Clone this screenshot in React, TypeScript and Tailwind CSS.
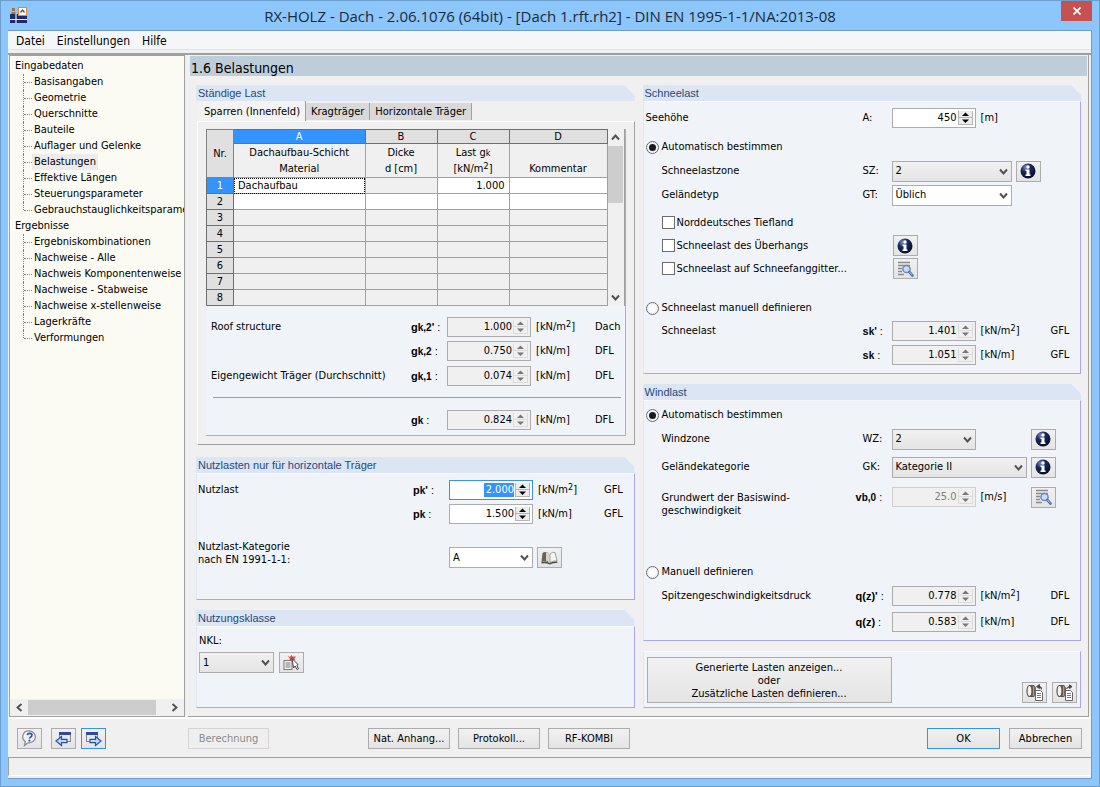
import React, { useId } from "react";
import clsx from "clsx";

/* ---------- icons ---------- */

const AppIcon = () => (
  <svg width="17" height="17" viewBox="0 0 17 17" aria-hidden="true">
    <rect x="0" y="7" width="17" height="9" fill="#1f2a6b" />
    <path d="M0 12.5h17M6 7v9" stroke="#e8ecf8" strokeWidth="1.2" />
    <path d="M2 1h3v3H2zM1.500 5h4v2h-4z" fill="#a0734a" />
    <rect x="8.500" y="0.500" width="8" height="8" fill="#fff" stroke="#d98a4a" />
    <path d="M10.500 5.500l2-2.500 2 2.500" fill="none" stroke="#7a4a2a" strokeWidth="1.400" />
  </svg>
);

const Chevron = ({ dir = "down" }: { dir?: "down" | "up" | "left" | "right" }) => {
  const d = {
    down: "M1 2.500l3.500 4 3.500-4",
    up: "M1 6.500l3.500-4 3.500 4",
    left: "M6.500 1l-4 3.500 4 3.500",
    right: "M2.500 1l4 3.500-4 3.500",
  }[dir];
  return (
    <svg width="9" height="9" viewBox="0 0 9 9" aria-hidden="true" className="shrink-0">
      <path d={d} fill="none" stroke="#505050" strokeWidth="1.900" />
    </svg>
  );
};

const InfoIcon = () => (
  <svg width="16" height="16" viewBox="0 0 16 16" aria-hidden="true">
    <defs>
      <radialGradient id="ball" cx="0.350" cy="0.250" r="0.800">
        <stop offset="0" stopColor="#7d8fc4" />
        <stop offset="0.400" stopColor="#1c2a5c" />
        <stop offset="1" stopColor="#060b26" />
      </radialGradient>
    </defs>
    <circle cx="8" cy="8" r="7.500" fill="url(#ball)" />
    <circle cx="8" cy="4" r="1.700" fill="#fff" />
    <path d="M5.500 6.500h4v5h1v1.500h-5v-1.500h1V8h-1z" fill="#fff" />
  </svg>
);

const LensIcon = () => (
  <svg width="17" height="16" viewBox="0 0 17 16" aria-hidden="true">
    <path d="M1 1.500h12M1 4.500h12M1 7.500h4M1 10.500h4M1 13.500h6" stroke="#8b8b8b" strokeWidth="1.300" />
    <circle cx="9.500" cy="8" r="3.600" fill="#c9dcf8" stroke="#7089b4" strokeWidth="1.500" />
    <path d="M12.300 11l3.200 3.500" stroke="#5676b8" strokeWidth="2.600" strokeLinecap="round" />
    <path d="M12.500 11l2.500 2.800" stroke="#a9c1ea" strokeWidth="0.900" />
  </svg>
);

const BookIcon = () => (
  <svg width="17" height="14" viewBox="0 0 17 14" aria-hidden="true">
    <path d="M1.500 2Q4 0 7.500 2v9Q4 9.500 0.500 11z" fill="#6a625a" />
    <path d="M5 1.200Q7 1 8.500 3v8.500Q7 9.500 5 9.800z" fill="#d8d2c8" />
    <path d="M9 3Q11 0.500 14 1.500l2 8.500Q12 9.500 9 11.500z" fill="#f6f6f4" stroke="#8a8a88" strokeWidth="0.800" />
    <path d="M0.500 11Q5 9.700 8.700 12 12 10 16.300 10.500v1.500Q12 11.500 8.700 13.500 5 11.500 0.500 12.500z" fill="#4d4d4d" />
  </svg>
);

const PickListIcon = () => (
  <svg width="17" height="17" viewBox="0 0 17 17" aria-hidden="true">
    <rect x="1" y="6.500" width="8" height="9" fill="#f6f6f6" stroke="#777" />
    <path d="M2.500 9h5M2.500 11h5M2.500 13h5" stroke="#777" />
    <path d="M4.500 2l2.500 1 1.500-2 1.500 2 3-1-1.500 2.500 1 2-3-1L7 6.500 6.500 4z" fill="#d94a42" />
    <path d="M9 4.500l6 6-1.200 0.600 1.700 3.600-1.500 0.800-1.900-3.500L10.500 14z" fill="#fff" stroke="#444" strokeWidth="1" />
  </svg>
);

const HelpIcon = () => (
  <svg width="17" height="17" viewBox="0 0 17 17" aria-hidden="true">
    <path d="M8.500 1a6.500 5.800 0 1 1-1.500 11.800L3.500 15.500l0.800-4A6 5.800 0 0 1 8.500 1z" fill="#f2f4f8" stroke="#8e8e8e" strokeWidth="1.300" />
    <path d="M6.300 5.200Q6.500 3.400 8.700 3.400t2.200 1.900q0 1.200-1.400 1.900-0.900 0.500-0.900 1.400" fill="none" stroke="#33549c" strokeWidth="1.700" />
    <circle cx="8.400" cy="10.600" r="1.100" fill="#33549c" />
  </svg>
);

const WindowArrowIcon = ({ back }: { back?: boolean }) => (
  <svg width="17" height="16" viewBox="0 0 17 16" aria-hidden="true">
    <g transform={back ? undefined : "translate(17 0) scale(-1 1)"}>
      <rect x="4.500" y="1.500" width="11" height="9" fill="#e6e8ee" stroke="#83838f" />
      <rect x="4" y="1" width="12" height="3" fill="#34499a" />
      <path d="M1 10l5.500-4.500V8.300H12v3.400H6.500v2.800z" fill="#b9dbfb" stroke="#2c4fa6" strokeWidth="1.200" />
    </g>
  </svg>
);

const TransferIcon = ({ out }: { out?: boolean }) => (
  <svg width="18" height="17" viewBox="0 0 18 17" aria-hidden="true">
    <path d="M3.500 1.500H8q1.500 0.500 1.500 5.500T8 12.500H3.500z" fill="#5f564d" stroke="#5b5550" />
    <path d="M6.800 2h1.500v10H6.800z" fill="#a59c90" />
    <ellipse cx="3.500" cy="7" rx="2.500" ry="5.500" fill="#f4f2ee" stroke="#5b5550" strokeWidth="1.200" />
    <path
      d={out ? "M10.500 5Q11 2.500 14 2.500M13.500 0.800l2.500 1.900-2.500 1.900z" : "M15.500 5.500Q16 2.500 13 2.500M13.500 0.500L10.500 2.600l3 2z"}
      fill="#444"
      stroke="#444"
      strokeWidth="0.900"
    />
    <path d="M9.500 6.500h5l2 2v8h-7z" fill="#fff" stroke="#666" />
    <path d="M11 9.500h4M11 11.500h4M11 13.500h4" stroke="#777" />
  </svg>
);

/* ---------- controls ---------- */

const face = "bg-linear-to-b from-[#f1f1f1] to-[#e4e4e4]";

function IconButton({ label, active, children }: { label: string; active?: boolean; children: React.ReactNode }) {
  return (
    <button
      type="button"
      aria-label={label}
      className={clsx("flex h-[21px] w-[25px] shrink-0 items-center justify-center border", face, active ? "border-[#3393ee]" : "border-[#acacac]")}
    >
      {children}
    </button>
  );
}

function TextButton({ className, children, disabled }: { className: string; children: React.ReactNode; disabled?: boolean }) {
  return (
    <button
      type="button"
      disabled={disabled}
      className={clsx("flex h-[21px] shrink-0 items-center justify-center border pt-px", className, disabled ? "border-[#d5d5d5] bg-[#efefef] text-[#8a8a8a]" : face)}
    >
      {children}
    </button>
  );
}

type SpinState = "edit" | "focus" | "readonly" | "off";

function Spin({ id, value, state = "readonly" }: { id: string; value: string; state?: SpinState }) {
  const live = state === "edit" || state === "focus";
  return (
    <div
      className={clsx(
        "flex h-5 w-[84px] shrink-0 items-center border pr-[2px]",
        state === "focus" ? "border-[#3393ee]" : state === "off" ? "border-[#cfcfcf]" : "border-[#acacac]",
        live ? "bg-white" : "bg-[#f0f0f0]",
      )}
    >
      {state === "focus" ? (
        <span className="flex min-w-0 flex-1 justify-end">
          <input id={id} defaultValue={value} className="h-[14px] w-[30px] bg-[#3393ff] text-right text-white outline-none" />
        </span>
      ) : (
        <input
          id={id}
          defaultValue={value}
          readOnly={!live}
          className={clsx("w-full min-w-0 flex-1 bg-transparent text-right outline-none", state === "off" && "text-[#7d7d7d]")}
        />
      )}
      <span className="ml-px flex w-[15px] flex-col">
        {["M0 4l3.500-3.500L7 4z", "M0 0.500h7L3.500 4z"].map((d, i) => (
          <button
            key={d}
            type="button"
            aria-label={i === 0 ? "Erhöhen" : "Verringern"}
            className={clsx("flex h-[7px] w-full items-center justify-center border-x border-b", live ? "border-[#b5b5b5] bg-[#ececec]" : "border-[#dcdcdc]")}
          >
            <svg width="7" height="4" viewBox="0 0 7 4" aria-hidden="true">
              <path d={d} fill={live ? "#000" : "#777"} />
            </svg>
          </button>
        ))}
      </span>
    </div>
  );
}

function Select({ id, value, className, grey }: { id: string; value: string; className: string; grey?: boolean }) {
  return (
    <div className={clsx("relative h-[21px] shrink-0", className)}>
      <select id={id} defaultValue={value} className={clsx("size-full appearance-none border border-[#acacac] pl-[3px]", grey ? face : "bg-white")}>
        <option>{value}</option>
      </select>
      <span className="pointer-events-none absolute top-[6px] right-1">
        <Chevron />
      </span>
    </div>
  );
}

function Radio({ name, label, checked }: { name: string; label: string; checked?: boolean }) {
  return (
    <label className="flex h-5 items-center gap-[3px] pl-[2px]">
      <input
        type="radio"
        name={name}
        defaultChecked={checked}
        className="size-[13px] appearance-none rounded-full border border-[#6b6b6b] bg-white bg-clip-content p-[2px] checked:bg-[#1a1a1a]"
      />
      {label}
    </label>
  );
}

function Check({ label, children }: { label: string; children?: React.ReactNode }) {
  return (
    <div className="flex h-[23px] items-center">
      <label className="flex w-[249px] shrink-0 items-center gap-[2px] pl-[18px]">
        <input type="checkbox" className="size-[13px] appearance-none border border-[#6b6b6b] bg-white" />
        {label}
      </label>
      {children}
    </div>
  );
}

/* ---------- form parts ---------- */

const Sym = ({ base, sub, prime }: { base: string; sub?: string; prime?: boolean }) => (
  <span className="font-['Liberation_Sans',Arial,sans-serif]">
    <b>{base}</b>
    {sub && <b className="text-[10px]">{sub}</b>}
    {prime && <b>'</b>} :
  </span>
);

const Unit = ({ children, squared }: { children: string; squared?: boolean }) => (
  <>
    [{children}
    {squared && <sup className="relative -top-[3px] align-baseline text-[9px] leading-none">2</sup>}]
  </>
);

const layouts = {
  panel: { label: "w-[204px] pl-1", sym: "w-[36px]", unit: "w-[59px]" },
  wide: { label: "w-[216px] pl-px", sym: "w-[36px]", unit: "w-[66px]" },
  right: { label: "w-[219px] pl-[18px]", sym: "w-[29px]", unit: "w-[70px]" },
  rightFlush: { label: "w-[219px] pl-[2px]", sym: "w-[29px]", unit: "w-[70px]" },
  rightLong: { label: "w-[212px] pl-[18px]", sym: "w-[36px]", unit: "w-[70px]" },
};

function Row({
  layout,
  label,
  sym,
  unit,
  type,
  className,
  control,
}: {
  layout: keyof typeof layouts;
  label?: React.ReactNode;
  sym: React.ReactNode;
  unit?: React.ReactNode;
  type?: string;
  className?: string;
  control: (id: string) => React.ReactNode;
}) {
  const id = useId();
  const l = layouts[layout];
  return (
    <div className={clsx("flex h-6 items-center whitespace-nowrap", className)}>
      <label htmlFor={id} className={clsx("shrink-0", l.label)}>
        {label}
      </label>
      <label htmlFor={id} className={clsx("shrink-0", l.sym)}>
        {sym}
      </label>
      {control(id)}
      {unit && <span className={clsx("ml-[5px] shrink-0", l.unit)}>{unit}</span>}
      {type && <span>{type}</span>}
    </div>
  );
}

const GroupTitle = ({ children }: { children: React.ReactNode }) => (
  <h2 className="h-4 bg-[#dbe5f4] pl-[2px] font-['Liberation_Sans',Arial,sans-serif] text-[11px] leading-4 text-[#1f497d] [clip-path:polygon(0_0,calc(100%-10px)_0,100%_10px,100%_100%,0_100%)]">
    {children}
  </h2>
);

const groupBody = "border-t border-r border-b border-l border-t-[#f8fafd] border-r-[#aaa5ee] border-b-[#aaa5ee] border-l-[#dfe8f6] bg-[#f0f4f9]";

/* ---------- sections ---------- */

const tree = [
  {
    title: "Eingabedaten",
    items: ["Basisangaben", "Geometrie", "Querschnitte", "Bauteile", "Auflager und Gelenke", "Belastungen", "Effektive Längen", "Steuerungsparameter", "Gebrauchstauglichkeitsparameter"],
  },
  {
    title: "Ergebnisse",
    items: ["Ergebniskombinationen", "Nachweise - Alle", "Nachweis Komponentenweise", "Nachweise - Stabweise", "Nachweise x-stellenweise", "Lagerkräfte", "Verformungen"],
  },
];

function Sidebar() {
  return (
    <nav className="flex w-[176px] shrink-0 flex-col border border-[#a0a0a0] bg-[#fbfbf3]">
      <div className="flex-1 overflow-hidden pt-[2px]">
        {tree.map((group) => (
          <div key={group.title}>
            <div className="h-4 pl-[5px] leading-4">{group.title}</div>
            <ul>
              {group.items.map((item, i) => (
                <li key={item} className="flex h-4 items-center pl-[13px] leading-4 whitespace-nowrap">
                  <span className={clsx("w-px shrink-0 self-stretch border-l border-dotted border-[#808080]", i === group.items.length - 1 && "mb-2")} />
                  <span className="w-[8px] shrink-0 border-t border-dotted border-[#808080]" />
                  <a href="#" className={clsx("px-[2px]", item === "Belastungen" && "bg-[#ececec]")}>
                    {item}
                  </a>
                </li>
              ))}
            </ul>
          </div>
        ))}
      </div>
      <div className="flex h-[17px] items-center bg-[#f0f0f0] px-[5px]">
        <Chevron dir="left" />
        <div className="ml-1 h-[15px] w-[128px] bg-[#cdcdcd]" />
        <div className="flex-1" />
        <Chevron dir="right" />
      </div>
    </nav>
  );
}

const cell = "border border-[#a0a0a0] p-0 font-normal";

function LayerTable() {
  return (
    <table className="w-full table-fixed border-collapse">
      <colgroup>
        <col className="w-[27px]" />
        <col />
        <col className="w-[72px]" />
        <col className="w-[72px]" />
        <col className="w-[98px]" />
      </colgroup>
      <thead>
        <tr>
          <th rowSpan={2} className="border border-[#808080] bg-[#e0e0e0] p-0 text-center font-normal">
            Nr.
          </th>
          {["A", "B", "C", "D"].map((c) => (
            <th key={c} className={clsx("h-[14px] border border-[#6f6f6f] p-0 text-center leading-[13px] font-normal", c === "A" ? "bg-[#3393ff] text-white" : "bg-[#e0e0e0]")}>
              {c}
            </th>
          ))}
        </tr>
        <tr className="h-[34px] bg-[#f0f0f0] text-center leading-4">
          <th className={cell}>
            Dachaufbau-Schicht
            <br />
            Material
          </th>
          <th className={cell}>
            Dicke
            <br />d [cm]
          </th>
          <th className={cell}>
            Last g<span className="text-[9px]">k</span>
            <br />
            <Unit squared>kN/m</Unit>
          </th>
          <th className={clsx(cell, "align-bottom")}>Kommentar</th>
        </tr>
      </thead>
      <tbody>
        {[1, 2, 3, 4, 5, 6, 7, 8].map((n) => (
          <tr key={n} className={clsx("h-4 leading-[13px]", n < 3 ? "bg-white" : "bg-[#f0f0f0]")}>
            <th className={clsx("border border-[#6f6f6f] p-0 text-center font-normal", n === 1 ? "bg-[#3393ff] text-white" : "bg-[#e0e0e0]")}>{n}</th>
            <td className={clsx(cell, "pl-1", n === 1 && "outline-1 -outline-offset-1 outline-black outline-dotted")}>{n === 1 && "Dachaufbau"}</td>
            <td className={clsx(cell, n === 1 && "bg-[#f0f0f0]")} />
            <td className={clsx(cell, "pr-1 text-right")}>{n === 1 && "1.000"}</td>
            <td className={cell} />
          </tr>
        ))}
      </tbody>
    </table>
  );
}

function PermanentLoad() {
  return (
    <section>
      <GroupTitle>Ständige Last</GroupTitle>
      <div role="tablist" className="flex h-5 items-end pl-[3px]">
        <button role="tab" aria-selected="true" className="h-5 border-r border-[#a0a0a0] bg-[#f3f3f3] px-[5px] pt-[2px]">
          Sparren (Innenfeld)
        </button>
        <button role="tab" aria-selected="false" className="mb-px h-[17px] border-r border-[#a0a0a0] bg-[#d9d9d9] px-[5px] pt-px">
          Kragträger
        </button>
        <button role="tab" aria-selected="false" className="mb-px h-[17px] border-r border-[#a0a0a0] bg-[#d9d9d9] px-[5px] pt-px">
          Horizontale Träger
        </button>
      </div>
      <div className="ml-px border border-t-white border-r-[#a0a0a0] border-b-[#a0a0a0] border-l-white pt-[7px] pr-2 pb-2 pl-2">
        <div className="border-r border-b border-[#aaa5ee] bg-[#f0f4f9]">
          <div className="flex bg-[#f0f0f0]">
            <LayerTable />
            <div className="flex w-[17px] shrink-0 flex-col items-center border-r border-[#a0a0a0] py-1">
              <Chevron dir="up" />
              <div className="mt-1 h-[57px] w-[15px] bg-[#cdcdcd]" />
              <div className="flex-1" />
              <Chevron />
            </div>
          </div>
          <div className="pt-[9px] pb-[3px] pl-px">
            <Row layout="panel" label="Roof structure" sym={<Sym base="g" sub="k,2" prime />} control={(id) => <Spin id={id} value="1.000" />} unit={<Unit squared>kN/m</Unit>} type="Dach" />
            <Row layout="panel" sym={<Sym base="g" sub="k,2" />} control={(id) => <Spin id={id} value="0.750" />} unit={<Unit>kN/m</Unit>} type="DFL" />
            <Row layout="panel" className="mt-px" label="Eigengewicht Träger (Durchschnitt)" sym={<Sym base="g" sub="k,1" />} control={(id) => <Spin id={id} value="0.074" />} unit={<Unit>kN/m</Unit>} type="DFL" />
            <hr className="mt-[9px] mr-1 mb-[10px] ml-[6px] border-[#a0a0a0]" />
            <Row layout="panel" sym={<Sym base="g" sub="k" />} control={(id) => <Spin id={id} value="0.824" />} unit={<Unit>kN/m</Unit>} type="DFL" />
          </div>
        </div>
      </div>
    </section>
  );
}

function ImposedLoad() {
  return (
    <section>
      <GroupTitle>Nutzlasten nur für horizontale Träger</GroupTitle>
      <div className={clsx(groupBody, "pt-1 pb-[31px]")}>
        <Row layout="wide" label="Nutzlast" sym={<Sym base="p" sub="k" prime />} control={(id) => <Spin id={id} value="2.000" state="focus" />} unit={<Unit squared>kN/m</Unit>} type="GFL" />
        <Row layout="wide" sym={<Sym base="p" sub="k" />} control={(id) => <Spin id={id} value="1.500" state="edit" />} unit={<Unit>kN/m</Unit>} type="GFL" />
        <div className="mt-[14px] flex items-end">
          <label htmlFor="category" className="mb-[2px] w-[252px] shrink-0 pl-px leading-[13px]">
            Nutzlast-Kategorie
            <br />
            nach EN 1991-1-1:
          </label>
          <Select id="category" value="A" className="mr-1 w-[84px]" />
          <IconButton label="Nutzlast-Kategorien">
            <BookIcon />
          </IconButton>
        </div>
      </div>
    </section>
  );
}

function ServiceClass() {
  return (
    <section className="flex flex-1 flex-col">
      <GroupTitle>Nutzungsklasse</GroupTitle>
      <div className={clsx(groupBody, "flex-1 pt-[6px] pl-[2px]")}>
        <label htmlFor="nkl" className="block h-[19px] leading-4">
          NKL:
        </label>
        <div className="flex gap-[5px]">
          <Select id="nkl" value="1" grey className="w-[75px]" />
          <IconButton label="Nutzungsklasse auswählen">
            <PickListIcon />
          </IconButton>
        </div>
      </div>
    </section>
  );
}

function SnowLoad() {
  return (
    <section>
      <GroupTitle>Schneelast</GroupTitle>
      <div className={clsx(groupBody, "pt-1 pb-[6px]")}>
        <Row layout="rightFlush" label="Seehöhe" sym="A:" control={(id) => <Spin id={id} value="450" state="edit" />} unit={<Unit>m</Unit>} />
        <div className="mt-[7px]">
          <Radio name="snow" label="Automatisch bestimmen" checked />
        </div>
        <Row
          layout="right"
          className="mt-[2px]"
          label="Schneelastzone"
          sym="SZ:"
          control={(id) => (
            <>
              <Select id={id} value="2" grey className="mr-1 w-[120px]" />
              <IconButton label="Info Schneelastzone">
                <InfoIcon />
              </IconButton>
            </>
          )}
        />
        <Row layout="right" label="Geländetyp" sym="GT:" control={(id) => <Select id={id} value="Üblich" className="w-[120px]" />} />
        <div className="mt-1">
          <Check label="Norddeutsches Tiefland" />
          <Check label="Schneelast des Überhangs">
            <IconButton label="Info Überhang">
              <InfoIcon />
            </IconButton>
          </Check>
          <Check label="Schneelast auf Schneefanggitter...">
            <IconButton label="Details Schneefanggitter">
              <LensIcon />
            </IconButton>
          </Check>
        </div>
        <div className="mt-[18px]">
          <Radio name="snow" label="Schneelast manuell definieren" />
        </div>
        <Row layout="right" className="mt-px" label="Schneelast" sym={<Sym base="s" sub="k" prime />} control={(id) => <Spin id={id} value="1.401" />} unit={<Unit squared>kN/m</Unit>} type="GFL" />
        <Row layout="right" sym={<Sym base="s" sub="k" />} control={(id) => <Spin id={id} value="1.051" />} unit={<Unit>kN/m</Unit>} type="GFL" />
      </div>
    </section>
  );
}

function WindLoad() {
  return (
    <section>
      <GroupTitle>Windlast</GroupTitle>
      <div className={clsx(groupBody, "pt-1 pb-[6px]")}>
        <Radio name="wind" label="Automatisch bestimmen" checked />
        <Row
          layout="right"
          className="mt-[2px]"
          label="Windzone"
          sym="WZ:"
          control={(id) => (
            <>
              <Select id={id} value="2" grey className="mr-[55px] w-[84px]" />
              <IconButton label="Info Windzone">
                <InfoIcon />
              </IconButton>
            </>
          )}
        />
        <Row
          layout="right"
          className="mt-1"
          label="Geländekategorie"
          sym="GK:"
          control={(id) => (
            <>
              <Select id={id} value="Kategorie II" grey className="mr-1 w-[135px]" />
              <IconButton label="Info Geländekategorie">
                <InfoIcon />
              </IconButton>
            </>
          )}
        />
        <div className="mt-[6px] flex">
          <label htmlFor="basewind" className="w-[212px] shrink-0 pt-[6px] pl-[18px] leading-[13px]">
            Grundwert der Basiswind-
            <br />
            geschwindigkeit
          </label>
          <div className="flex h-6 items-center">
            <label htmlFor="basewind" className="w-[36px] shrink-0">
              <Sym base="v" sub="b,0" />
            </label>
            <Spin id="basewind" value="25.0" state="off" />
            <span className="ml-[5px] w-[50px]">[m/s]</span>
            <IconButton label="Details Basiswindgeschwindigkeit">
              <LensIcon />
            </IconButton>
          </div>
        </div>
        <div className="mt-[45px]">
          <Radio name="wind" label="Manuell definieren" />
        </div>
        <Row layout="rightLong" className="mt-[2px]" label="Spitzengeschwindigkeitsdruck" sym={<Sym base="q(z)" prime />} control={(id) => <Spin id={id} value="0.778" />} unit={<Unit squared>kN/m</Unit>} type="DFL" />
        <Row layout="rightLong" className="mt-[2px]" sym={<Sym base="q(z)" />} control={(id) => <Spin id={id} value="0.583" />} unit={<Unit>kN/m</Unit>} type="DFL" />
      </div>
    </section>
  );
}

function LoadActions() {
  return (
    <section className={clsx(groupBody, "flex flex-1 items-end justify-between py-1 pr-[3px] pl-[3px]")}>
      <button type="button" className={clsx("flex h-[46px] w-[245px] flex-col items-center justify-center border border-[#acacac] leading-[13px]", face)}>
        <span>Generierte Lasten anzeigen...</span>
        <span>oder</span>
        <span>Zusätzliche Lasten definieren...</span>
      </button>
      <div className="flex gap-[5px]">
        <IconButton label="Importieren">
          <TransferIcon />
        </IconButton>
        <IconButton label="Exportieren">
          <TransferIcon out />
        </IconButton>
      </div>
    </section>
  );
}

export default function App() {
  return (
    <div className="flex min-h-screen flex-col border border-[#6a9fce] bg-[#8cc6fb] px-[7px] pb-[7px] font-['DejaVu_Sans_Condensed','Noto_Sans',sans-serif] text-[11px] leading-4 text-black">
      <header className="relative flex h-[29px] items-center justify-center">
        <span className="absolute top-[6px] left-[2px]">
          <AppIcon />
        </span>
        <h1 className="font-['Open_Sans','Noto_Sans',sans-serif] text-[15px] text-[#1c2a36]">RX-HOLZ - Dach - 2.06.1076 (64bit) - [Dach 1.rft.rh2] - DIN EN 1995-1-1/NA:2013-08</h1>
        <button type="button" aria-label="Schließen" className="absolute top-0 right-0 flex h-5 w-[31px] items-center justify-center bg-[#c75050]">
          <svg width="8" height="8" viewBox="0 0 8 8" aria-hidden="true">
            <path d="M0.500 0.500l7 7M7.500 0.500l-7 7" stroke="#fff" strokeWidth="1.700" />
          </svg>
        </button>
      </header>
      <div className="flex flex-1 flex-col border-t border-r border-b border-[#6f9dcb] bg-[#f0f0f0]">
        <div className="flex h-[19px] items-center gap-3 border-b border-[#e2e3e4] bg-[#f5f6f7] pt-px pl-2 text-[12px]">
          <button type="button">Datei</button>
          <button type="button">Einstellungen</button>
          <button type="button">Hilfe</button>
        </div>
        <div className="mt-[3px] flex flex-1 gap-[3px] border-t-2 border-b-2 border-t-[#a0a0a0] border-b-white pr-[2px] pl-px">
          <Sidebar />
          <main className="flex min-w-0 flex-1 flex-col border-r border-b border-[#a0a0a0] pt-px pr-px pl-[2px]">
            <h2 className="h-5 bg-[#bfcddb] px-px text-[14px] leading-6">1.6 Belastungen</h2>
            <div className="grid flex-1 grid-cols-2 gap-2 pt-[9px] pr-[6px] pb-2 pl-[6px]">
              <div className="flex flex-col">
                <PermanentLoad />
                <div className="h-3" />
                <ImposedLoad />
                <div className="h-[10px]" />
                <ServiceClass />
              </div>
              <div className="flex flex-col gap-[10px]">
                <SnowLoad />
                <WindLoad />
                <LoadActions />
              </div>
            </div>
          </main>
        </div>
        <footer className="flex h-[38px] items-center pt-px pr-[9px] pl-[9px]">
          <IconButton label="Hilfe">
            <HelpIcon />
          </IconButton>
          <span className="mr-[5px] ml-[9px]">
            <IconButton label="Zurück">
              <WindowArrowIcon back />
            </IconButton>
          </span>
          <IconButton label="Weiter" active>
            <WindowArrowIcon />
          </IconButton>
          <TextButton className="ml-[82px] w-[81px]" disabled>
            Berechnung
          </TextButton>
          <div className="ml-[99px] flex gap-2">
            <TextButton className="w-[82px] border-[#acacac]">Nat. Anhang...</TextButton>
            <TextButton className="w-[82px] border-[#acacac]">Protokoll...</TextButton>
            <TextButton className="w-[82px] border-[#acacac]">RF-KOMBI</TextButton>
          </div>
          <div className="ml-auto flex gap-[9px]">
            <TextButton className="w-[73px] border-[#3393ee]">OK</TextButton>
            <TextButton className="w-[73px] border-[#acacac]">Abbrechen</TextButton>
          </div>
        </footer>
        <div className="mb-[2px] h-[19px] border-t border-b border-l border-t-[#a0a0a0] border-b-white border-l-[#a0a0a0]" />
      </div>
    </div>
  );
}
